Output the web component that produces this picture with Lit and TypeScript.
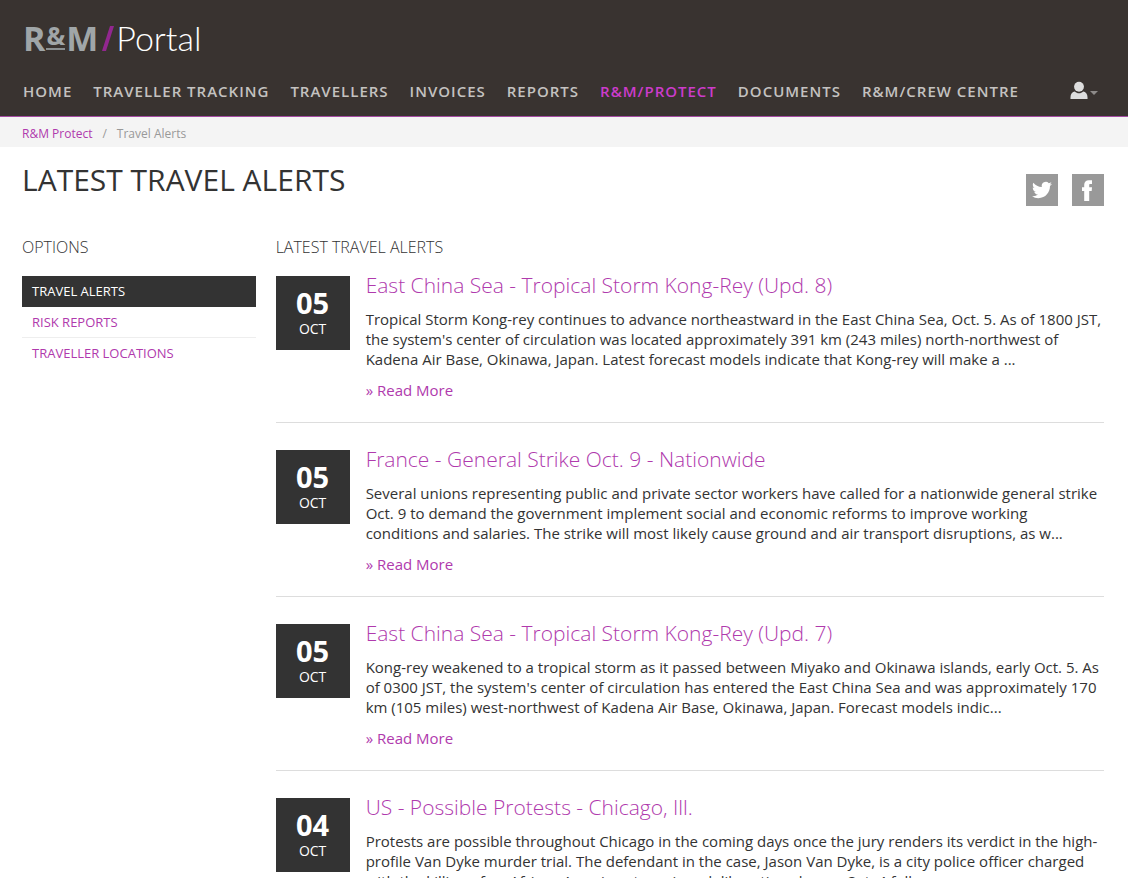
import { LitElement, html, css, svg } from "lit";
import { customElement, property } from "lit/decorators.js";

interface Alert {
  day: string;
  month: string;
  title: string;
  text: string;
}

const NAV = [
  "Home",
  "Traveller Tracking",
  "Travellers",
  "Invoices",
  "Reports",
  "R&M/Protect",
  "Documents",
  "R&M/Crew Centre",
];

const OPTIONS = ["Travel Alerts", "Risk Reports", "Traveller Locations"];

const ALERTS: Alert[] = [
  {
    day: "05",
    month: "OCT",
    title: "East China Sea - Tropical Storm Kong-Rey (Upd. 8)",
    text: "Tropical Storm Kong-rey continues to advance northeastward in the East China Sea, Oct. 5. As of 1800 JST, the system's center of circulation was located approximately 391 km (243 miles) north-northwest of Kadena Air Base, Okinawa, Japan. Latest forecast models indicate that Kong-rey will make a ...",
  },
  {
    day: "05",
    month: "OCT",
    title: "France - General Strike Oct. 9 - Nationwide",
    text: "Several unions representing public and private sector workers have called for a nationwide general strike Oct. 9 to demand the government implement social and economic reforms to improve working conditions and salaries. The strike will most likely cause ground and air transport disruptions, as w...",
  },
  {
    day: "05",
    month: "OCT",
    title: "East China Sea - Tropical Storm Kong-Rey (Upd. 7)",
    text: "Kong-rey weakened to a tropical storm as it passed between Miyako and Okinawa islands, early Oct. 5. As of 0300 JST, the system's center of circulation has entered the East China Sea and was approximately 170 km (105 miles) west-northwest of Kadena Air Base, Okinawa, Japan. Forecast models indic...",
  },
  {
    day: "04",
    month: "OCT",
    title: "US - Possible Protests - Chicago, Ill.",
    text: "Protests are possible throughout Chicago in the coming days once the jury renders its verdict in the high-profile Van Dyke murder trial. The defendant in the case, Jason Van Dyke, is a city police officer charged with the killing of an African American teen, jury deliberations began Oct. 4 foll...",
  },
];

@customElement("alert-item")
export class AlertItem extends LitElement {
  @property({ attribute: false }) alert!: Alert;

  static styles = css`
    :host {
      display: block;
      border-bottom: 1px solid #ddd;
      padding-bottom: 22px;
      margin-bottom: 27px;
    }
    .alert {
      display: flex;
      gap: 16px;
    }
    .date {
      flex: none;
      box-sizing: border-box;
      width: 74px;
      height: 74px;
      padding-top: 10px;
      background: #333;
      color: #fff;
      text-align: center;
      display: flex;
      flex-direction: column;
    }
    .day {
      font-size: 29px;
      line-height: 34px;
      font-weight: 700;
    }
    .month {
      font-size: 14px;
      line-height: 18px;
    }
    .body {
      flex: 1;
      min-width: 0;
    }
    .title {
      margin: 0 0 15px;
      font-size: 21px;
      line-height: 18px;
      font-weight: 300;
    }
    .text {
      margin: 0 0 11px;
      font-size: 15px;
      line-height: 20px;
    }
    a {
      color: #b03aad;
      text-decoration: none;
    }
    .more {
      display: block;
      width: max-content;
      font-size: 15px;
      line-height: 20px;
    }
  `;

  render() {
    const a = this.alert;
    return html`<article class="alert">
      <time class="date"><span class="day">${a.day}</span><span class="month">${a.month}</span></time>
      <div class="body">
        <h3 class="title"><a href="#">${a.title}</a></h3>
        <p class="text">${a.text}</p>
        <a class="more" href="#">» Read More</a>
      </div>
    </article>`;
  }
}

const userIcon = svg`<circle cx="9.5" cy="5.5" r="5.2"/><path d="M0.5 18.5v-2c0-3.4 2-5.4 4.6-5.9 1.2 1.2 2.700 1.900 4.400 1.900s3.200-.7 4.400-1.900c2.600.5 4.600 2.500 4.600 5.900v2z"/>`;
const twitterIcon = svg`<path d="M23.953 4.570a10 10 0 0 1-2.825.775 4.958 4.958 0 0 0 2.163-2.723 9.900 9.900 0 0 1-3.127 1.184 4.920 4.920 0 0 0-8.384 4.482C7.690 8.095 4.067 6.130 1.640 3.162a4.822 4.822 0 0 0-.666 2.475c0 1.710.870 3.213 2.188 4.096a4.904 4.904 0 0 1-2.228-.616v.060a4.923 4.923 0 0 0 3.946 4.827 4.996 4.996 0 0 1-2.212.085 4.936 4.936 0 0 0 4.604 3.417 9.867 9.867 0 0 1-6.102 2.105c-.390 0-.779-.023-1.170-.067a13.995 13.995 0 0 0 7.557 2.209c9.053 0 13.998-7.496 13.998-13.985 0-.210 0-.420-.015-.630a9.935 9.935 0 0 0 2.460-2.548z"/>`;
const facebookIcon = svg`<path d="M2.200 21V11H0V7.300h2.200V5C2.200 1.900 4 .2 6.800 .2H10V4H8.200C7.400 4 7.200 4.400 7.200 5.100v2.200H10L9.700 11H7.200v10z"/>`;

@customElement("app-root")
export class AppRoot extends LitElement {
  static styles = css`
    :host {
      display: block;
      background: #fff;
      color: #333;
      font-family: "Open Sans", "Noto Sans", sans-serif;
      font-size: 14px;
      line-height: 20px;
    }
    a {
      color: #b03aad;
      text-decoration: none;
    }
    .header {
      background: #393330;
      border-bottom: 1px solid #a44ba2;
      padding: 19px 24px 0 23px;
    }
    .logo {
      display: flex;
      width: max-content;
      align-items: baseline;
      height: 40px;
      line-height: 38px;
      color: #fff;
    }
    .brand {
      color: #a0a6a8;
      font-size: 34px;
      font-weight: 700;
    }
    .amp {
      display: inline-block;
      margin: 0 1px;
      font-size: 25px;
      line-height: 26px;
      vertical-align: 6px;
      border-bottom: 2px solid #8b9092;
    }
    .slash {
      display: block;
      width: 12px;
      height: 25px;
      margin: 0 2px 0 4px;
    }
    .product {
      font-family: Lato, sans-serif;
      font-size: 34px;
      font-weight: 300;
    }
    .bar {
      display: flex;
      justify-content: space-between;
      align-items: center;
      box-sizing: border-box;
      height: 57px;
      padding: 6px 6px 0 0;
    }
    .nav {
      display: flex;
      gap: 21px;
    }
    .nav a {
      color: #c4c2c0;
      font-size: 15px;
      font-weight: 600;
      letter-spacing: 1px;
      text-transform: uppercase;
      white-space: nowrap;
    }
    .nav a.active {
      color: #cc3ccc;
    }
    .user {
      display: flex;
      align-items: center;
      gap: 2px;
      border: 0;
      padding: 0;
      background: none;
    }
    .caret {
      border: 4px solid transparent;
      border-top-color: #8e8b89;
      border-bottom: 0;
      margin-top: 4px;
    }
    .crumbs {
      display: flex;
      gap: 10px;
      height: 30px;
      padding: 0 22px;
      background: #f4f4f4;
      color: #999;
      font-size: 12px;
      line-height: 33px;
    }
    .head {
      display: flex;
      justify-content: space-between;
      padding: 17px 24px 0 22px;
    }
    h1 {
      margin: 0;
      font-size: 30px;
      line-height: 32px;
      font-weight: 400;
      text-transform: uppercase;
    }
    .social {
      display: flex;
      gap: 14px;
      padding-top: 10px;
    }
    .social a {
      display: grid;
      place-items: center;
      width: 32px;
      height: 32px;
      background: #999;
    }
    .columns {
      display: grid;
      grid-template-columns: 22fr 78fr;
      column-gap: 20px;
      padding: 31px 24px 0 22px;
    }
    h2 {
      margin: 0 0 19px;
      font-size: 16px;
      line-height: 20px;
      font-weight: 300;
      text-transform: uppercase;
    }
    .options a {
      display: block;
      height: 30px;
      padding: 0 10px;
      border-bottom: 1px solid #eee;
      font-size: 13px;
      line-height: 30px;
      text-transform: uppercase;
    }
    .options a:last-child {
      border-bottom: 0;
    }
    .options a.active {
      background: #333;
      color: #fff;
      border-color: #333;
    }
  `;

  render() {
    return html`
      <header class="header">
        <a class="logo" href="#">
          <span class="brand">R<span class="amp">&amp;</span>M</span>
          <svg class="slash" viewBox="0 0 12 25" aria-hidden="true"><path fill="#92278f" d="M8 0h4L4 25H0z" /></svg>
          <span class="product">Portal</span>
        </a>
        <div class="bar">
          <nav class="nav">
            ${NAV.map((n) => html`<a href="#" class=${n === "R&M/Protect" ? "active" : ""}>${n}</a>`)}
          </nav>
          <button class="user" aria-label="Account">
            <svg width="18" height="19" viewBox="0 0 19 19" fill="#ddd">${userIcon}</svg>
            <span class="caret"></span>
          </button>
        </div>
      </header>
      <nav class="crumbs" aria-label="Breadcrumb">
        <a href="#">R&amp;M Protect</a><span>/</span><span>Travel Alerts</span>
      </nav>
      <div class="head">
        <h1>Latest Travel Alerts</h1>
        <div class="social">
          <a href="#" aria-label="Twitter"><svg width="20" height="20" viewBox="0 0 24 24" fill="#fff">${twitterIcon}</svg></a>
          <a href="#" aria-label="Facebook"><svg width="12" height="21" viewBox="0 0 12 21" fill="#fff">${facebookIcon}</svg></a>
        </div>
      </div>
      <div class="columns">
        <aside>
          <h2>Options</h2>
          <nav class="options">
            ${OPTIONS.map((o, i) => html`<a href="#" class=${i === 0 ? "active" : ""}>${o}</a>`)}
          </nav>
        </aside>
        <main>
          <h2>Latest Travel Alerts</h2>
          ${ALERTS.map((a) => html`<alert-item .alert=${a}></alert-item>`)}
        </main>
      </div>
    `;
  }
}
